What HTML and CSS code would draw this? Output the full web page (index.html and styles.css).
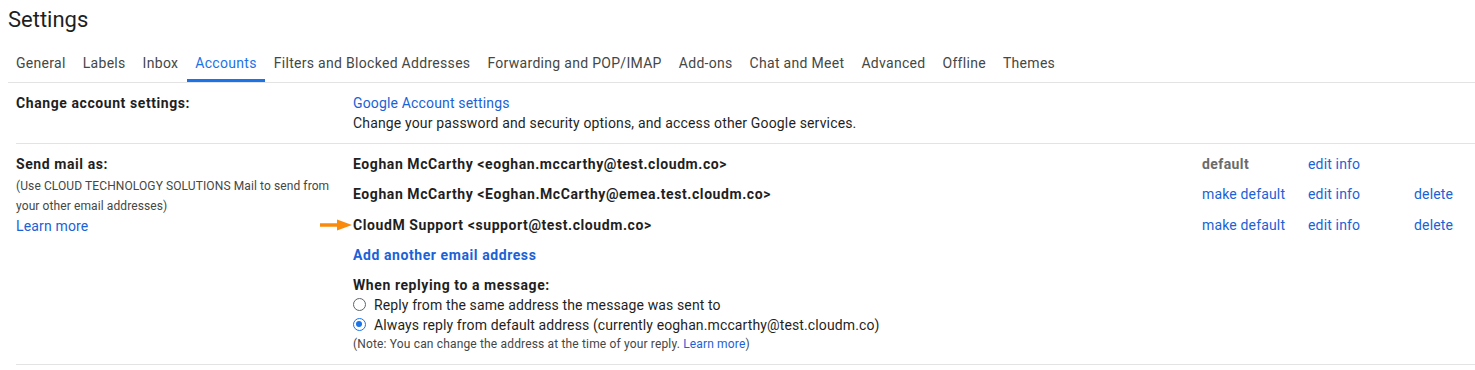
FILE: index.html
```html
<!DOCTYPE html>
<html>
<head>
<meta charset="utf-8">
<link rel="stylesheet" href="styles.css">
</head>
<body>
<div class="page">
  <h1 class="title">Settings</h1>
  <nav class="tabs">
    <span class="tab">General</span>
    <span class="tab">Labels</span>
    <span class="tab">Inbox</span>
    <span class="tab active">Accounts</span>
    <span class="tab">Filters and Blocked Addresses</span>
    <span class="tab">Forwarding and POP/IMAP</span>
    <span class="tab">Add-ons</span>
    <span class="tab">Chat and Meet</span>
    <span class="tab">Advanced</span>
    <span class="tab">Offline</span>
    <span class="tab">Themes</span>
  </nav>

  <section class="row">
    <div class="label"><span class="label-title">Change account settings:</span></div>
    <div class="content">
      <div><a class="link">Google Account settings</a></div>
      <div>Change your password and security options, and access other Google services.</div>
    </div>
  </section>

  <section class="row">
    <div class="label">
      <div class="label-title">Send mail as:</div>
      <div class="small">(Use CLOUD TECHNOLOGY SOLUTIONS Mail to send from your other email addresses)</div>
      <div><a class="link">Learn more</a></div>
    </div>
    <div class="content">
      <div class="addr-grid">
        <div class="addr">Eoghan McCarthy &lt;eoghan.mccarthy@test.cloudm.co&gt;</div>
        <div class="act default">default</div>
        <div class="act"><a class="link">edit info</a></div>
        <div class="act"></div>

        <div class="addr">Eoghan McCarthy &lt;Eoghan.McCarthy@emea.test.cloudm.co&gt;</div>
        <div class="act"><a class="link">make default</a></div>
        <div class="act"><a class="link">edit info</a></div>
        <div class="act"><a class="link">delete</a></div>

        <div class="addr arrowed">
          <svg class="arrow" width="32" height="12" viewBox="0 0 32 12"><path d="M0 4.2 H17 V0.5 L32 6 L17 11.5 V7.8 H0 Z" fill="#f98a0b"/></svg>
          CloudM Support &lt;support@test.cloudm.co&gt;</div>
        <div class="act"><a class="link">make default</a></div>
        <div class="act"><a class="link">edit info</a></div>
        <div class="act"><a class="link">delete</a></div>

        <div class="addr"><a class="link">Add another email address</a></div>
      </div>
      <div class="reply">
        <div class="label-title">When replying to a message:</div>
        <label class="radio-row"><span class="radio"></span>Reply from the same address the message was sent to</label>
        <label class="radio-row"><span class="radio checked"></span>Always reply from default address (currently eoghan.mccarthy@test.cloudm.co)</label>
        <div class="note">(Note: You can change the address at the time of your reply. <a class="link">Learn more</a>)</div>
      </div>
    </div>
  </section>
</div>
</body>
</html>
```

FILE: styles.css
```css
* { box-sizing: border-box; }
html, body { margin: 0; padding: 0; background: #fff; }
body {
  font-family: Roboto, "Liberation Sans", Arial, sans-serif;
  font-size: 14px;
  letter-spacing: 0.16px;
  color: #1f1f1f;
}
.title {
  margin: 0;
  padding: 6px 0 0 8px;
  font-size: 22px;
  font-weight: 400;
  line-height: 28px;
  letter-spacing: 0;
  color: #1f1f1f;
}
.tabs {
  display: flex;
  gap: 1px;
  margin: 14px 0 0 8px;
  border-bottom: 1px solid #e3e3e3;
  height: 35px;
}
.tab {
  padding: 0 8px 4px;
  line-height: 30px;
  letter-spacing: 0.3px;
  color: #444746;
  border-bottom: 3px solid transparent;
  height: 34px;
}
.tab.active {
  color: #1a73e8;
  border-bottom-color: #1a73e8;
}
.row {
  display: grid;
  grid-template-columns: 337px 1fr;
  margin-left: 16px;
  padding: 10px 0 10px 0;
  border-bottom: 1px solid #e3e3e3;
  line-height: 20px;
}
.label-title { font-weight: 700; color: #1f1f1f; letter-spacing: 0.58px; }
.small { font-size: 12px; line-height: 20px; color: #444746; margin-top: 2px; padding-right: 8px; letter-spacing: 0.1px; }
.link { color: #1a62d6; text-decoration: none; cursor: pointer; }
.addr-grid {
  display: grid;
  grid-template-columns: 1fr 106px 106px 61px;
  grid-auto-rows: 30.3px;
  align-items: start;
}
.addr { font-weight: 700; letter-spacing: 0.58px; position: relative; }
.default { font-weight: 700; color: #6b6b6b; letter-spacing: 0.4px; }
.arrow { position: absolute; left: -33px; top: 4px; }
.reply { margin-top: -0.5px; }
.radio-row { display: flex; align-items: center; height: 20px; color: #1f1f1f; letter-spacing: 0.12px; }
.radio {
  width: 13px; height: 13px;
  border: 1px solid #5f6368;
  border-radius: 50%;
  margin: 0 8px 0 0;
  position: relative;
  flex: none;
}
.radio.checked { border-color: #1a73e8; border-width: 1.5px; }
.radio.checked::after {
  content: "";
  position: absolute;
  left: 2px; top: 2px;
  width: 6px; height: 6px;
  border-radius: 50%;
  background: #1a73e8;
}
.note { font-size: 12px; line-height: 19px; color: #444746; letter-spacing: 0.16px; }
```
